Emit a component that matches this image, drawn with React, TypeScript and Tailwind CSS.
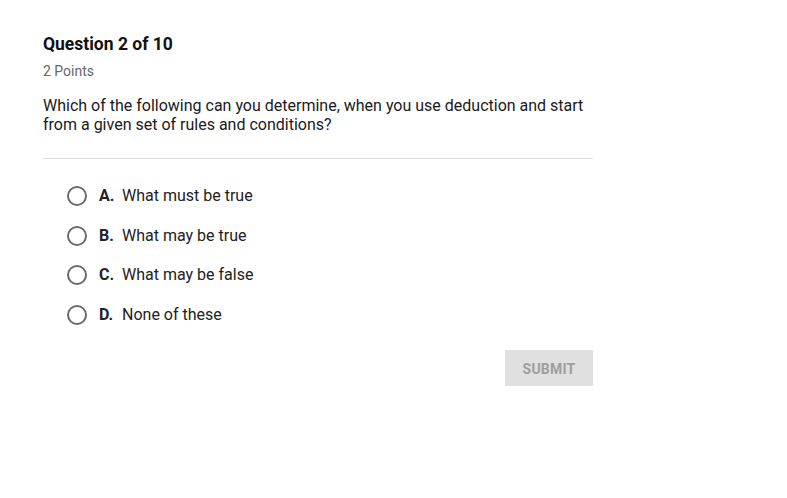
import React from "react";

const options = [
  { l: "A.", t: "What must be true" },
  { l: "B.", t: "What may be true" },
  { l: "C.", t: "What may be false" },
  { l: "D.", t: "None of these" },
];

export default function App() {
  return (
    <div className="w-[787px] h-[498px] bg-white text-[#212121]" style={{ fontFamily: "Roboto, sans-serif" }}>
      <div className="pl-[43px] pt-[34px] w-[593px]">
        <div className="text-[17.5px] font-bold leading-[20px] text-[#111]">Question 2 of 10</div>
        <div className="mt-[8px] text-[14px] leading-[18px] text-[#666]">2 Points</div>
        <div className="mt-[16px] text-[16px] leading-[19px] text-[#1a1a1a]">
          Which of the following can you determine, when you use deduction and start from a given set of rules and conditions?
        </div>
        <div className="mt-[24px] border-t border-[#dcdcdc]" />
        <div className="mt-[27px] flex flex-col gap-[19.5px] pl-[24px]">
          {options.map((o) => (
            <div key={o.l} className="flex items-center h-[20px]">
              <div className="w-[20px] h-[20px] rounded-full border-2 border-[#6b6b6b]" />
              <span className="ml-[12px] text-[16px] font-bold text-[#222] w-[23px]">{o.l}</span>
              <span className="text-[16px] text-[#222]">{o.t}</span>
            </div>
          ))}
        </div>
        <div className="mt-[25px] flex justify-end">
          <div className="w-[88px] h-[36px] pt-[3px] bg-[#e0e0e0] flex items-center justify-center text-[14px] font-bold text-[#9e9e9e] tracking-[0.2px]">
            SUBMIT
          </div>
        </div>
      </div>
    </div>
  );
}
